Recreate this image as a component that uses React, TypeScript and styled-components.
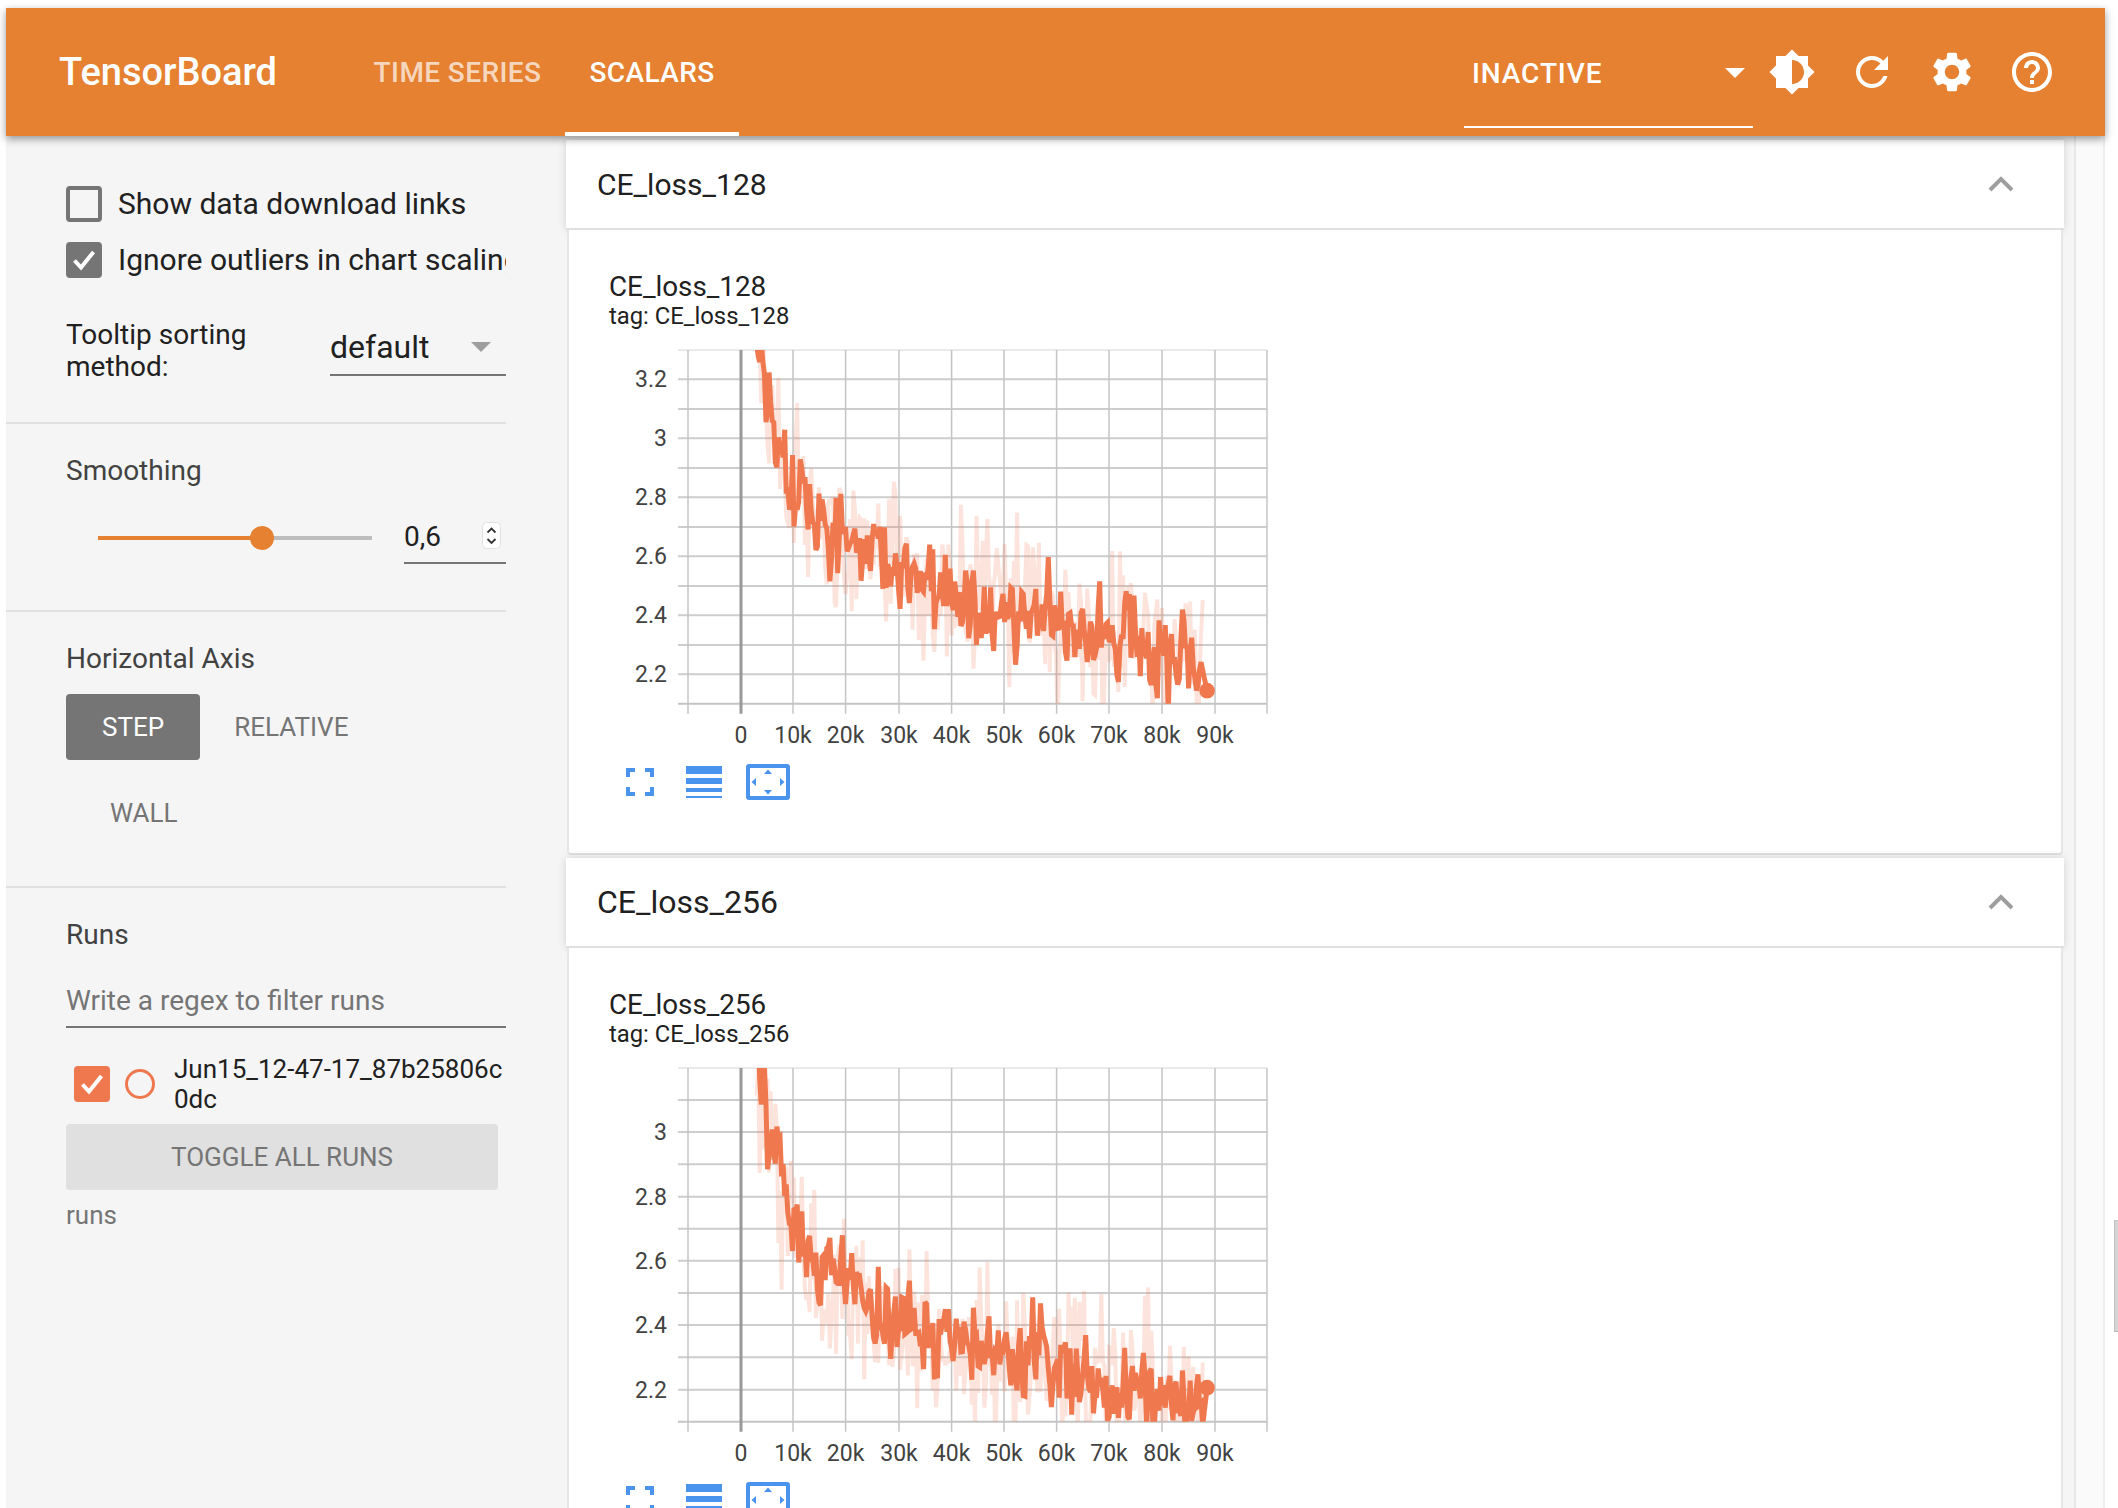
import React from 'react';
import styled, { createGlobalStyle } from 'styled-components';

const GlobalStyle = createGlobalStyle`
    html, body {
        margin: 0;
        padding: 0;
        overflow: hidden;
        background: #fff;
    }
    * {
        box-sizing: border-box;
    }
`;

const ORANGE = '#e58130';
const RUN = '#f0784f';
const BLUE = '#4a94ee';

const Page = styled.div`
    position: relative;
    width: 2118px;
    height: 1508px;
    padding: 8px 13px 0 6px;
    overflow: hidden;
    background: #fff;
    font-family: Roboto, 'Liberation Sans', sans-serif;
    color: #212121;
`;

const ScrollThumb = styled.div`
    position: absolute;
    right: 0;
    top: 1220px;
    width: 4px;
    height: 112px;
    background: #d4d4d4;
    border-left: 1px solid #c4c4c4;
    border-top: 1px solid #c4c4c4;
    border-bottom: 1px solid #b8b8b8;
`;

const Toolbar = styled.header`
    position: relative;
    z-index: 2;
    display: flex;
    align-items: stretch;
    height: 128px;
    background: ${ORANGE};
    color: #fff;
    box-shadow: 0 3px 8px rgba(0, 0, 0, 0.4);
`;

const Logo = styled.div`
    margin-left: 53px;
    align-self: center;
    font-size: 38px;
    font-weight: 500;
    width: 291px;
`;

const Tab = styled.div<{ $active?: boolean }>`
    display: flex;
    align-items: center;
    justify-content: center;
    width: ${({ $active }) => ($active ? 174 : 215)}px;
    font-size: 28px;
    font-weight: 500;
    letter-spacing: 0.4px;
    color: ${({ $active }) => ($active ? '#fff' : 'rgba(255, 255, 255, 0.7)')};
    border-bottom: 4px solid ${({ $active }) => ($active ? '#fff' : 'transparent')};
    border-top: 4px solid transparent;
`;

const ToolbarSpacer = styled.div`
    flex: 1;
`;

const StatusSelect = styled.div`
    display: flex;
    align-items: center;
    justify-content: space-between;
    width: 289px;
    height: 120px;
    padding: 12px 8px 0 8px;
    border-bottom: 2px solid #fff;
    font-size: 28px;
    font-weight: 500;
    letter-spacing: 0.9px;
`;

const WhiteCaret = styled.span`
    width: 0;
    height: 0;
    margin-top: -1px;
    border-left: 10px solid transparent;
    border-right: 10px solid transparent;
    border-top: 10px solid #fff;
`;

const ToolIcons = styled.div`
    display: flex;
    align-items: center;
    gap: 32px;
    margin-left: 15px;
    margin-right: 49px;
`;

const ToolIcon = styled.svg`
    display: block;
    width: 48px;
    height: 48px;
    fill: #fff;
`;

const Content = styled.div`
    display: flex;
    height: 1372px;
    background: #fafafa;
    border-right: 2px solid #eee;
`;

const Sidebar = styled.aside`
    flex: 0 0 560px;
    background: #f5f5f5;
`;

const SideSection = styled.section<{ $top: number; $height: number }>`
    width: 500px;
    height: ${({ $height }) => $height}px;
    padding: ${({ $top }) => $top}px 0 0 60px;
    border-bottom: 2px solid #e0e0e0;
`;

const LastSection = styled(SideSection)`
    border-bottom: none;
`;

const CheckRow = styled.label`
    display: flex;
    align-items: center;
    gap: 16px;
    height: 36px;
    margin-bottom: 20px;
    font-size: 30px;
    white-space: nowrap;
    overflow: hidden;
`;

const CheckText = styled.span`
    margin-top: -2px;
`;

const CheckBox = styled.span<{ $checked?: boolean; $color?: string }>`
    flex: 0 0 36px;
    display: flex;
    align-items: center;
    justify-content: center;
    width: 36px;
    height: 36px;
    border-radius: 4px;
    border: 4px solid ${({ $color }) => $color || '#757575'};
    background: ${({ $checked, $color }) => ($checked ? $color || '#757575' : 'transparent')};
`;

const CheckMark = styled.svg`
    width: 28px;
    height: 28px;
    flex: none;
    fill: none;
    stroke: #fff;
    stroke-width: 4;
`;

const SortRow = styled.div`
    display: flex;
    margin-top: 41px;
`;

const SortLabel = styled.div`
    width: 264px;
    font-size: 28px;
    line-height: 32px;
`;

const SortSelect = styled.div`
    display: flex;
    align-items: center;
    justify-content: space-between;
    width: 176px;
    height: 57px;
    padding-right: 15px;
    font-size: 32px;
    border-bottom: 2px solid #757575;
`;

const GreyCaret = styled.span`
    width: 0;
    height: 0;
    border-left: 10px solid transparent;
    border-right: 10px solid transparent;
    border-top: 10px solid #9e9e9e;
`;

const Heading = styled.div`
    font-size: 28px;
    line-height: 34px;
    margin-bottom: -2px;
    color: #424242;
`;

const SliderRow = styled.div`
    display: flex;
    margin-top: 31px;
`;

const Slider = styled.div`
    position: relative;
    width: 274px;
    height: 40px;
    margin-left: 32px;
`;

const SliderTrack = styled.div`
    position: absolute;
    left: 0;
    right: 0;
    top: 19px;
    height: 4px;
    background: #bdbdbd;
`;

const SliderFill = styled.div`
    height: 100%;
    background: ${ORANGE};
`;

const SliderThumb = styled.div`
    position: absolute;
    top: 9px;
    width: 24px;
    height: 24px;
    margin-left: -12px;
    border-radius: 50%;
    background: ${ORANGE};
`;

const NumberField = styled.div`
    display: flex;
    align-items: flex-start;
    justify-content: space-between;
    width: 102px;
    height: 47px;
    margin-left: 32px;
    padding: 1px 5px 0 0;
    font-size: 28px;
    line-height: 38px;
    border-bottom: 2px solid #757575;
`;

const Spinner = styled.svg`
    width: 19px;
    height: 27px;
    margin-top: 4px;
`;

const AxisButtons = styled.div`
    display: flex;
    flex-wrap: wrap;
    margin-top: 20px;
`;

const AxisBreak = styled.div`
    flex: 0 0 100%;
    height: 20px;
`;

const AxisButton = styled.div<{ $active?: boolean; $pad: number }>`
    display: flex;
    align-items: center;
    height: 66px;
    padding: 0 ${({ $pad }) => $pad}px;
    border-radius: 4px;
    font-size: 26px;
    color: ${({ $active }) => ($active ? '#fff' : '#757575')};
    background: ${({ $active }) => ($active ? '#757575' : 'transparent')};
`;

const FilterInput = styled.input`
    display: block;
    width: 100%;
    height: 60px;
    margin-top: 18px;
    padding: 6px 0 0;
    border: none;
    border-bottom: 2px solid #757575;
    background: transparent;
    outline: none;
    font-family: inherit;
    font-size: 28px;

    &::placeholder {
        color: #757575;
        opacity: 1;
    }
`;

const RunRow = styled.div`
    display: flex;
    align-items: center;
    margin-top: 26px;
    padding-left: 8px;
`;

const RunRadio = styled.span`
    flex: none;
    width: 30px;
    height: 30px;
    margin: 0 19px 0 15px;
    border-radius: 50%;
    border: 3px solid ${RUN};
`;

const RunName = styled.div`
    width: 332px;
    font-size: 26px;
    line-height: 30px;
    word-break: break-all;
`;

const ToggleButton = styled.div`
    display: flex;
    align-items: center;
    justify-content: center;
    width: 432px;
    height: 66px;
    margin-top: 10px;
    border-radius: 4px;
    background: #e0e0e0;
    color: #757575;
    font-size: 26px;
`;

const RunsNote = styled.div`
    margin-top: 10px;
    font-size: 26px;
    line-height: 30px;
    color: #757575;
`;

const Scroller = styled.main`
    flex: 0 0 1510px;
    padding: 4px 10px 0 0;
    background: #f5f5f5;
    border-right: 2px solid #e8e8e8;
`;

const CardGroup = styled.section`
    margin-bottom: 3px;
`;

const CardHeader = styled.div<{ $size: number }>`
    display: flex;
    align-items: center;
    justify-content: space-between;
    height: 90px;
    padding: 0 50px 0 31px;
    background: #fff;
    border-bottom: 2px solid #e0e0e0;
    box-shadow: 0 0 8px rgba(0, 0, 0, 0.14);
    font-size: ${({ $size }) => $size}px;
`;

const Chevron = styled.svg`
    width: 26px;
    height: 16px;
    fill: none;
    stroke: #9e9e9e;
    stroke-width: 4;
`;

const CardBody = styled.div`
    height: 625px;
    margin: 0 1px;
    padding: 40px 0 0 40px;
    background: #fff;
    border-bottom: 2px solid #e0e0e0;
    border-left: 2px solid #e6e6e6;
    border-right: 2px solid #e6e6e6;
    border-radius: 0 0 4px 4px;
`;

const ChartTitle = styled.div`
    font-size: 27.8px;
    line-height: 34px;
`;

const ChartTag = styled.div`
    margin-top: -2px;
    font-size: 23.8px;
    line-height: 28px;
`;

const ChartSvg = styled.svg`
    display: block;
    margin-top: 10px;
    font-family: Roboto, 'Liberation Sans', sans-serif;
    font-size: 23px;
`;

const ChartActions = styled.div`
    display: flex;
    align-items: center;
    margin: 13px 0 0 17px;
`;

const ActionIcon = styled.svg<{ $gap: number }>`
    display: block;
    flex: none;
    margin-right: ${({ $gap }) => $gap}px;
    fill: ${BLUE};
`;

type Point = [number, number];

type ChartSpec = {
    id: string;
    seed: number;
    titleSize: number;
    zBase: number;
    hLines: number[];
    labels: [string, number][];
    mean: Point[];
    end: Point;
};

const ORIGIN_X = 609;
const XS = [688, 741, 793, 845.6, 899, 951.6, 1004, 1056.6, 1109, 1162, 1215, 1267];
const X_LABELS = ['0', '10k', '20k', '30k', '40k', '50k', '60k', '70k', '80k', '90k'];

const zx = (z: number) => 580 + z / 2.18 - ORIGIN_X;

const random = (seed: number) => {
    let a = seed;
    return () => {
        a = (a + 0x6d2b79f5) | 0;
        let t = Math.imul(a ^ (a >>> 15), 1 | a);
        t = (t + Math.imul(t ^ (t >>> 7), 61 | t)) ^ t;
        return ((t ^ (t >>> 14)) >>> 0) / 4294967296;
    };
};

// fake run data: the mean is traced from the reference, the jitter is seeded
const buildSeries = (spec: ChartSpec) => {
    const next = random(spec.seed);
    const gauss = () => (next() + next() + next() + next() - 2) * 1.73;
    const start = spec.mean[0][0];
    const stop = spec.mean[spec.mean.length - 1][0];
    const raw: Point[] = [];
    const smooth: Point[] = [];
    let wobble = 0;
    let seg = 0;
    for (let x = start; x <= stop; x += 3.4) {
        while (seg < spec.mean.length - 2 && spec.mean[seg + 1][0] < x) seg++;
        const [x0, y0] = spec.mean[seg];
        const [x1, y1] = spec.mean[seg + 1];
        const base = y0 + ((x - x0) / (x1 - x0)) * (y1 - y0);
        const tail = next() < 0.16 ? (next() - 0.5) * 320 : 0;
        raw.push([x, base + gauss() * 115 + tail]);
        wobble = wobble * 0.12 + gauss() * 62;
        smooth.push([x, base + wobble]);
    }
    smooth.push(spec.end);
    return { raw, smooth };
};

const charts: ChartSpec[] = [
    {
        id: '128',
        seed: 128,
        titleSize: 30,
        zBase: -10,
        hLines: [379.3, 409, 438.3, 468, 497.3, 527, 556.3, 586, 615.3, 645, 674.3],
        labels: [['3.2', 379.3], ['3', 438.3], ['2.8', 497.3], ['2.6', 556.3], ['2.4', 615.3], ['2.2', 674.3]],
        mean: [[385, 60], [420, 250], [440, 350], [460, 460], [500, 510], [530, 620], [580, 650], [640, 680], [700, 720], [760, 770], [820, 810], [880, 840], [940, 860], [1000, 860], [1060, 890], [1120, 920], [1180, 920], [1240, 950], [1300, 980], [1360, 960]],
        end: [1367, 1082],
    },
    {
        id: '256',
        seed: 256,
        titleSize: 32,
        zBase: -18,
        hLines: [382, 414, 446.3, 478.7, 510.7, 542.7, 575, 607, 639.3, 671.7],
        labels: [['3', 414], ['2.8', 478.7], ['2.6', 542.7], ['2.4', 607], ['2.2', 671.7]],
        mean: [[385, 60], [400, 220], [430, 340], [450, 500], [480, 580], [520, 640], [560, 720], [600, 750], [650, 840], [700, 870], [760, 900], [820, 900], [880, 920], [940, 970], [1000, 960], [1040, 1010], [1100, 1030], [1160, 1070], [1220, 1070], [1300, 1070], [1360, 1100]],
        end: [1367, 1043],
    },
];

const toPath = (points: Point[], zBase: number) =>
    points.map(([x, y], i) => `${i ? 'L' : 'M'}${zx(x).toFixed(1)} ${(y / 3 + zBase).toFixed(1)}`).join('');

const ScalarChart = ({ spec }: { spec: ChartSpec }) => {
    const { raw, smooth } = buildSeries(spec);
    const top = 10;
    const bottom = 363.7;
    const dotX = zx(spec.end[0]);
    const dotY = spec.end[1] / 3 + spec.zBase;
    const offset = 340;
    return (
        <ChartSvg width="680" height="411" viewBox="0 0 680 411">
            <defs>
                <clipPath id={`clip-${spec.id}`}>
                    <rect x={69} y={top} width={589} height={bottom - top} />
                </clipPath>
            </defs>
            {spec.hLines.map((y) => (
                <line key={y} x1={69} x2={658} y1={y - offset} y2={y - offset} stroke="#cdcdcd" strokeWidth="2" />
            ))}
            <line x1={69} x2={658} y1={bottom} y2={bottom} stroke="#c4c4c4" strokeWidth="2" />
            <line x1={69} x2={658} y1={top} y2={top} stroke="#d4d4d4" strokeWidth="1" />
            {XS.map((x, i) => (
                <line
                    key={x}
                    x1={x - ORIGIN_X}
                    x2={x - ORIGIN_X}
                    y1={top}
                    y2={bottom + 10}
                    stroke={i === 1 ? '#999' : '#c4c4c4'}
                    strokeWidth={i === 1 ? 3 : 1.5}
                />
            ))}
            <g clipPath={`url(#clip-${spec.id})`} fill="none" strokeLinejoin="miter" strokeMiterlimit="3">
                <path d={toPath(raw, spec.zBase)} stroke={RUN} strokeOpacity="0.2" strokeWidth="4" />
                <path d={toPath(smooth, spec.zBase)} stroke={RUN} strokeWidth="5" />
            </g>
            <circle cx={dotX} cy={dotY} r="7.8" fill={RUN} />
            {spec.labels.map(([text, y]) => (
                <text key={text} x={58} y={y - offset + 8} textAnchor="end" fill="#424242">
                    {text}
                </text>
            ))}
            {X_LABELS.map((text, i) => (
                <text key={text} x={XS[i + 1] - ORIGIN_X} y={bottom + 39} textAnchor="middle" fill="#424242">
                    {text}
                </text>
            ))}
        </ChartSvg>
    );
};

const FitIcon = () => (
    <ActionIcon $gap={32} width="28" height="28" viewBox="0 0 28 28">
        <path d="M0 0h9v4H4v5H0zM19 0h9v9h-4V4h-5zM0 19h4v5h5v4H0zM24 19h4v9h-9v-4h5z" />
    </ActionIcon>
);

const ListIcon = () => (
    <ActionIcon $gap={24} width="36" height="32" viewBox="0 0 36 32">
        <path d="M0 0h36v8H0zM0 12h36v6H0zM0 22h36v4H0zM0 30h36v2H0z" />
    </ActionIcon>
);

const RangeIcon = () => (
    <ActionIcon $gap={0} width="44" height="36" viewBox="0 0 44 36">
        <path
            fillRule="evenodd"
            d="M3 0h38a3 3 0 0 1 3 3v30a3 3 0 0 1-3 3H3a3 3 0 0 1-3-3V3a3 3 0 0 1 3-3zM4 4v28h36V4zM22 5.500l4 4.500h-8zM22 30.500l-4-4.500h8zM5.500 18l4.500-4v8zM38.500 18l-4.500 4v-8z"
        />
    </ActionIcon>
);

const Check = () => (
    <CheckMark viewBox="0 0 28 28">
        <path d="M4.500 14.500l6.500 7L23.500 6" />
    </CheckMark>
);

const ChartCard = ({ spec }: { spec: ChartSpec }) => (
    <CardGroup>
        <CardHeader $size={spec.titleSize}>
            <span>CE_loss_{spec.id}</span>
            <Chevron viewBox="0 0 26 16">
                <path d="M2 14L13 3l11 11" />
            </Chevron>
        </CardHeader>
        <CardBody>
            <ChartTitle>CE_loss_{spec.id}</ChartTitle>
            <ChartTag>tag: CE_loss_{spec.id}</ChartTag>
            <ScalarChart spec={spec} />
            <ChartActions>
                <FitIcon />
                <ListIcon />
                <RangeIcon />
            </ChartActions>
        </CardBody>
    </CardGroup>
);

const SMOOTHING = 0.6;

const App = () => (
    <Page>
        <GlobalStyle />
        <Toolbar>
            <Logo>TensorBoard</Logo>
            <Tab>TIME SERIES</Tab>
            <Tab $active>SCALARS</Tab>
            <ToolbarSpacer />
            <StatusSelect>
                INACTIVE
                <WhiteCaret />
            </StatusSelect>
            <ToolIcons>
                <ToolIcon viewBox="0 0 24 24">
                    <path
                        fillRule="evenodd"
                        d="M20 15.310L23.310 12 20 8.690V4h-4.690L12 .69 8.690 4H4v4.690L.69 12 4 15.310V20h4.690L12 23.310 15.310 20H20v-4.690zM12 18V6c3.310 0 6 2.690 6 6s-2.690 6-6 6z"
                    />
                </ToolIcon>
                <ToolIcon viewBox="0 0 24 24">
                    <path d="M17.650 6.350C16.200 4.900 14.210 4 12 4c-4.420 0-7.990 3.580-7.990 8s3.570 8 7.990 8c3.730 0 6.840-2.550 7.730-6h-2.080c-.82 2.330-3.040 4-5.650 4-3.310 0-6-2.690-6-6s2.690-6 6-6c1.660 0 3.140.69 4.220 1.780L13 11h7V4l-2.350 2.350z" />
                </ToolIcon>
                <ToolIcon viewBox="0 0 24 24">
                    <path d="M19.140 12.940c.04-.3.06-.61.06-.94 0-.32-.02-.64-.07-.94l2.030-1.580c.18-.14.23-.41.12-.61l-1.920-3.320c-.12-.22-.37-.29-.59-.22l-2.390.96c-.5-.38-1.030-.7-1.620-.94l-.36-2.540c-.04-.24-.24-.41-.48-.41h-3.840c-.24 0-.43.17-.47.41l-.36 2.540c-.59.24-1.130.57-1.620.94l-2.390-.96c-.22-.08-.47 0-.59.22L2.740 8.870c-.12.21-.08.47.12.61l2.030 1.580c-.05.3-.09.63-.09.94s.02.64.07.94l-2.030 1.580c-.18.14-.23.41-.12.61l1.920 3.320c.12.22.37.29.59.22l2.390-.96c.5.38 1.030.7 1.620.94l.36 2.540c.05.24.24.41.48.41h3.840c.24 0 .44-.17.47-.41l.36-2.540c.59-.24 1.130-.56 1.620-.94l2.390.96c.22.08.47 0 .59-.22l1.920-3.320c.12-.22.07-.47-.12-.61l-2.010-1.580zM12 15.600c-1.980 0-3.600-1.620-3.600-3.600s1.620-3.600 3.600-3.600 3.600 1.620 3.600 3.600-1.620 3.600-3.600 3.600z" />
                </ToolIcon>
                <ToolIcon viewBox="0 0 24 24">
                    <path d="M11 18h2v-2h-2v2zm1-16C6.480 2 2 6.480 2 12s4.480 10 10 10 10-4.480 10-10S17.520 2 12 2zm0 18c-4.410 0-8-3.590-8-8s3.590-8 8-8 8 3.590 8 8-3.590 8-8 8zm0-14c-2.210 0-4 1.790-4 4h2c0-1.100.9-2 2-2s2 .9 2 2c0 2-3 1.750-3 5h2c0-2.250 3-2.500 3-5 0-2.210-1.790-4-4-4z" />
                </ToolIcon>
            </ToolIcons>
        </Toolbar>
        <Content>
            <Sidebar>
                <SideSection $top={50} $height={288}>
                    <CheckRow>
                        <CheckBox />
                        <CheckText>Show data download links</CheckText>
                    </CheckRow>
                    <CheckRow>
                        <CheckBox $checked>
                            <Check />
                        </CheckBox>
                        <CheckText>Ignore outliers in chart scaling</CheckText>
                    </CheckRow>
                    <SortRow>
                        <SortLabel>
                            Tooltip sorting
                            <br />
                            method:
                        </SortLabel>
                        <SortSelect>
                            default
                            <GreyCaret />
                        </SortSelect>
                    </SortRow>
                </SideSection>
                <SideSection $top={30} $height={188}>
                    <Heading>Smoothing</Heading>
                    <SliderRow>
                        <Slider>
                            <SliderTrack>
                                <SliderFill style={{ width: `${SMOOTHING * 100}%` }} />
                            </SliderTrack>
                            <SliderThumb style={{ left: `${SMOOTHING * 100}%` }} />
                        </Slider>
                        <NumberField>
                            0,6
                            <Spinner viewBox="0 0 19 27">
                                <rect x="0.500" y="0.500" width="18" height="26" rx="4" fill="#fff" stroke="#e0e0e0" />
                                <path d="M5.500 10.500l4-4 4 4M5.500 17l4 4 4-4" fill="none" stroke="#333" strokeWidth="1.800" />
                            </Spinner>
                        </NumberField>
                    </SliderRow>
                </SideSection>
                <SideSection $top={30} $height={276}>
                    <Heading>Horizontal Axis</Heading>
                    <AxisButtons>
                        <AxisButton $active $pad={36}>STEP</AxisButton>
                        <AxisButton $pad={34}>RELATIVE</AxisButton>
                        <AxisBreak />
                        <AxisButton $pad={44}>WALL</AxisButton>
                    </AxisButtons>
                </SideSection>
                <LastSection $top={30} $height={400}>
                    <Heading>Runs</Heading>
                    <FilterInput placeholder="Write a regex to filter runs" readOnly />
                    <RunRow>
                        <CheckBox $checked $color={RUN}>
                            <Check />
                        </CheckBox>
                        <RunRadio />
                        <RunName>Jun15_12-47-17_87b25806c0dc</RunName>
                    </RunRow>
                    <ToggleButton>TOGGLE ALL RUNS</ToggleButton>
                    <RunsNote>runs</RunsNote>
                </LastSection>
            </Sidebar>
            <Scroller>
                {charts.map((spec) => (
                    <ChartCard key={spec.id} spec={spec} />
                ))}
            </Scroller>
        </Content>
        <ScrollThumb />
    </Page>
);

export default App;
